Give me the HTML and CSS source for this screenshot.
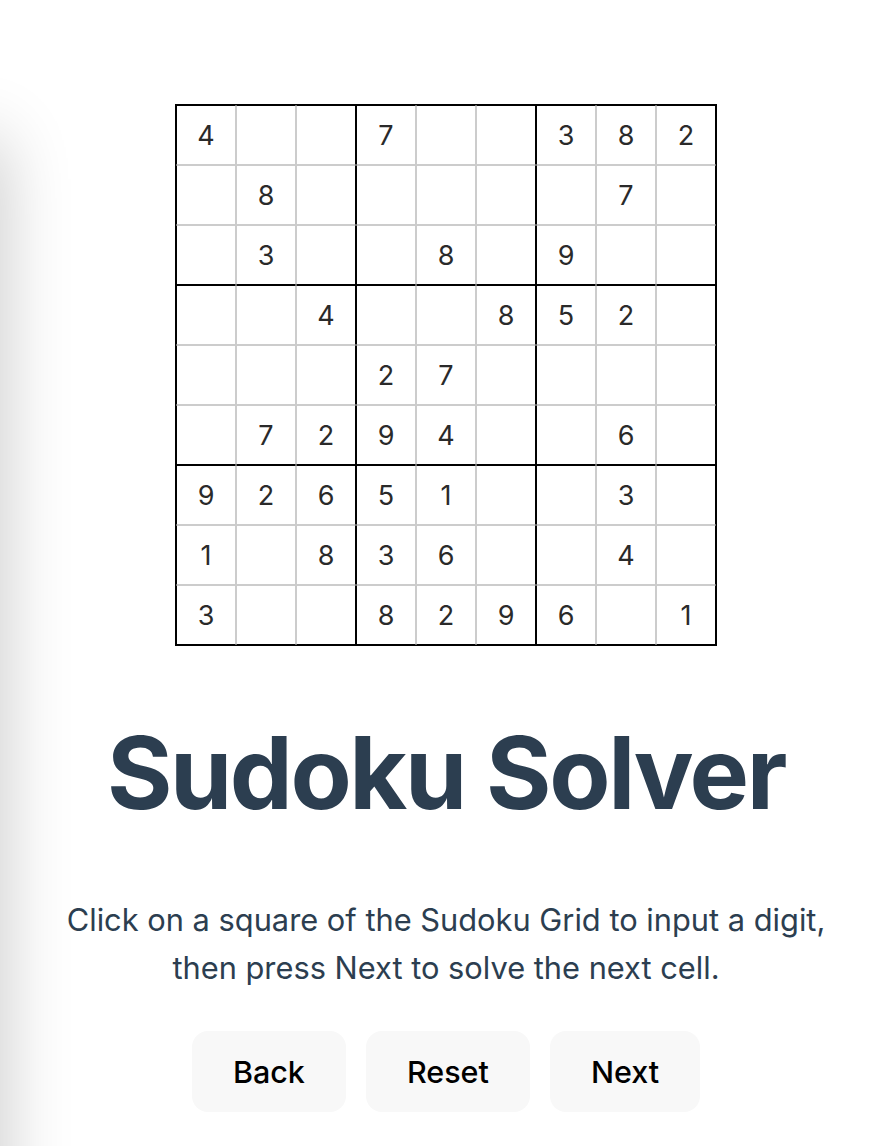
FILE: index.html
```html
<!DOCTYPE html>
<html lang="en">
<head>
<meta charset="utf-8">
<title>Sudoku Solver</title>
<link rel="stylesheet" href="styles.css">
</head>
<body>
<div class="edge-shadow"></div>
<main class="app">
  <div class="board">
    <div class="cell">4</div><div class="cell"></div><div class="cell"></div><div class="cell">7</div><div class="cell"></div><div class="cell"></div><div class="cell">3</div><div class="cell">8</div><div class="cell">2</div>
    <div class="cell"></div><div class="cell">8</div><div class="cell"></div><div class="cell"></div><div class="cell"></div><div class="cell"></div><div class="cell"></div><div class="cell">7</div><div class="cell"></div>
    <div class="cell"></div><div class="cell">3</div><div class="cell"></div><div class="cell"></div><div class="cell">8</div><div class="cell"></div><div class="cell">9</div><div class="cell"></div><div class="cell"></div>
    <div class="cell"></div><div class="cell"></div><div class="cell">4</div><div class="cell"></div><div class="cell"></div><div class="cell">8</div><div class="cell">5</div><div class="cell">2</div><div class="cell"></div>
    <div class="cell"></div><div class="cell"></div><div class="cell"></div><div class="cell">2</div><div class="cell">7</div><div class="cell"></div><div class="cell"></div><div class="cell"></div><div class="cell"></div>
    <div class="cell"></div><div class="cell">7</div><div class="cell">2</div><div class="cell">9</div><div class="cell">4</div><div class="cell"></div><div class="cell"></div><div class="cell">6</div><div class="cell"></div>
    <div class="cell">9</div><div class="cell">2</div><div class="cell">6</div><div class="cell">5</div><div class="cell">1</div><div class="cell"></div><div class="cell"></div><div class="cell">3</div><div class="cell"></div>
    <div class="cell">1</div><div class="cell"></div><div class="cell">8</div><div class="cell">3</div><div class="cell">6</div><div class="cell"></div><div class="cell"></div><div class="cell">4</div><div class="cell"></div>
    <div class="cell">3</div><div class="cell"></div><div class="cell"></div><div class="cell">8</div><div class="cell">2</div><div class="cell">9</div><div class="cell">6</div><div class="cell"></div><div class="cell">1</div>
  </div>
  <h1 class="title">Sudoku Solver</h1>
  <p class="hint">Click on a square of the Sudoku Grid to input a digit,<br>then press Next to solve the next cell.</p>
  <div class="actions">
    <button class="btn btn-back">Back</button>
    <button class="btn btn-reset">Reset</button>
    <button class="btn btn-next">Next</button>
  </div>
</main>
</body>
</html>
```

FILE: styles.css
```css
html, body {
  margin: 0;
  padding: 0;
  background: #ffffff;
}

body {
  font-family: Inter, "Noto Sans", "Liberation Sans", sans-serif;
  color: #2c3e50;
  overflow: hidden;
}

.edge-shadow {
  position: fixed;
  left: -60px;
  top: 140px;
  width: 60px;
  height: 3000px;
  box-shadow: 0 0 70px rgba(0, 0, 0, 0.24);
  pointer-events: none;
}

.app {
  display: flex;
  flex-direction: column;
  align-items: center;
  padding: 104px 4px 0 0;
  text-align: center;
}

.board {
  display: grid;
  grid-template-columns: repeat(9, 60px);
  grid-template-rows: repeat(9, 60px);
  border: 1px solid #000;
}

.cell {
  box-sizing: border-box;
  border: 1px solid #cccccc;
  display: flex;
  align-items: center;
  justify-content: center;
  font-size: 27px;
  color: #2a2a2a;
}

.cell:nth-child(3n+1) { border-left-color: #000; }
.cell:nth-child(3n) { border-right-color: #000; }
.cell:nth-child(n+1):nth-child(-n+9),
.cell:nth-child(n+28):nth-child(-n+36),
.cell:nth-child(n+55):nth-child(-n+63) { border-top-color: #000; }
.cell:nth-child(n+19):nth-child(-n+27),
.cell:nth-child(n+46):nth-child(-n+54),
.cell:nth-child(n+73):nth-child(-n+81) { border-bottom-color: #000; }

.title {
  margin: 67px 0 0;
  font-size: 100px;
  line-height: 120px;
  font-weight: 700;
  letter-spacing: -2.4px;
  color: #2c3e50;
}

.hint {
  margin: 63px 0 0;
  font-size: 30.8px;
  line-height: 48px;
  color: #2c3e50;
}

.actions {
  display: flex;
  gap: 20px;
  margin-top: 39px;
}

.btn {
  height: 81px;
  padding: 0 41px;
  border: none;
  border-radius: 16px;
  background: #f8f8f8;
  font-family: Inter, "Noto Sans", "Liberation Sans", sans-serif;
  font-size: 30.5px;
  font-weight: 500;
  color: #000;
}
```
